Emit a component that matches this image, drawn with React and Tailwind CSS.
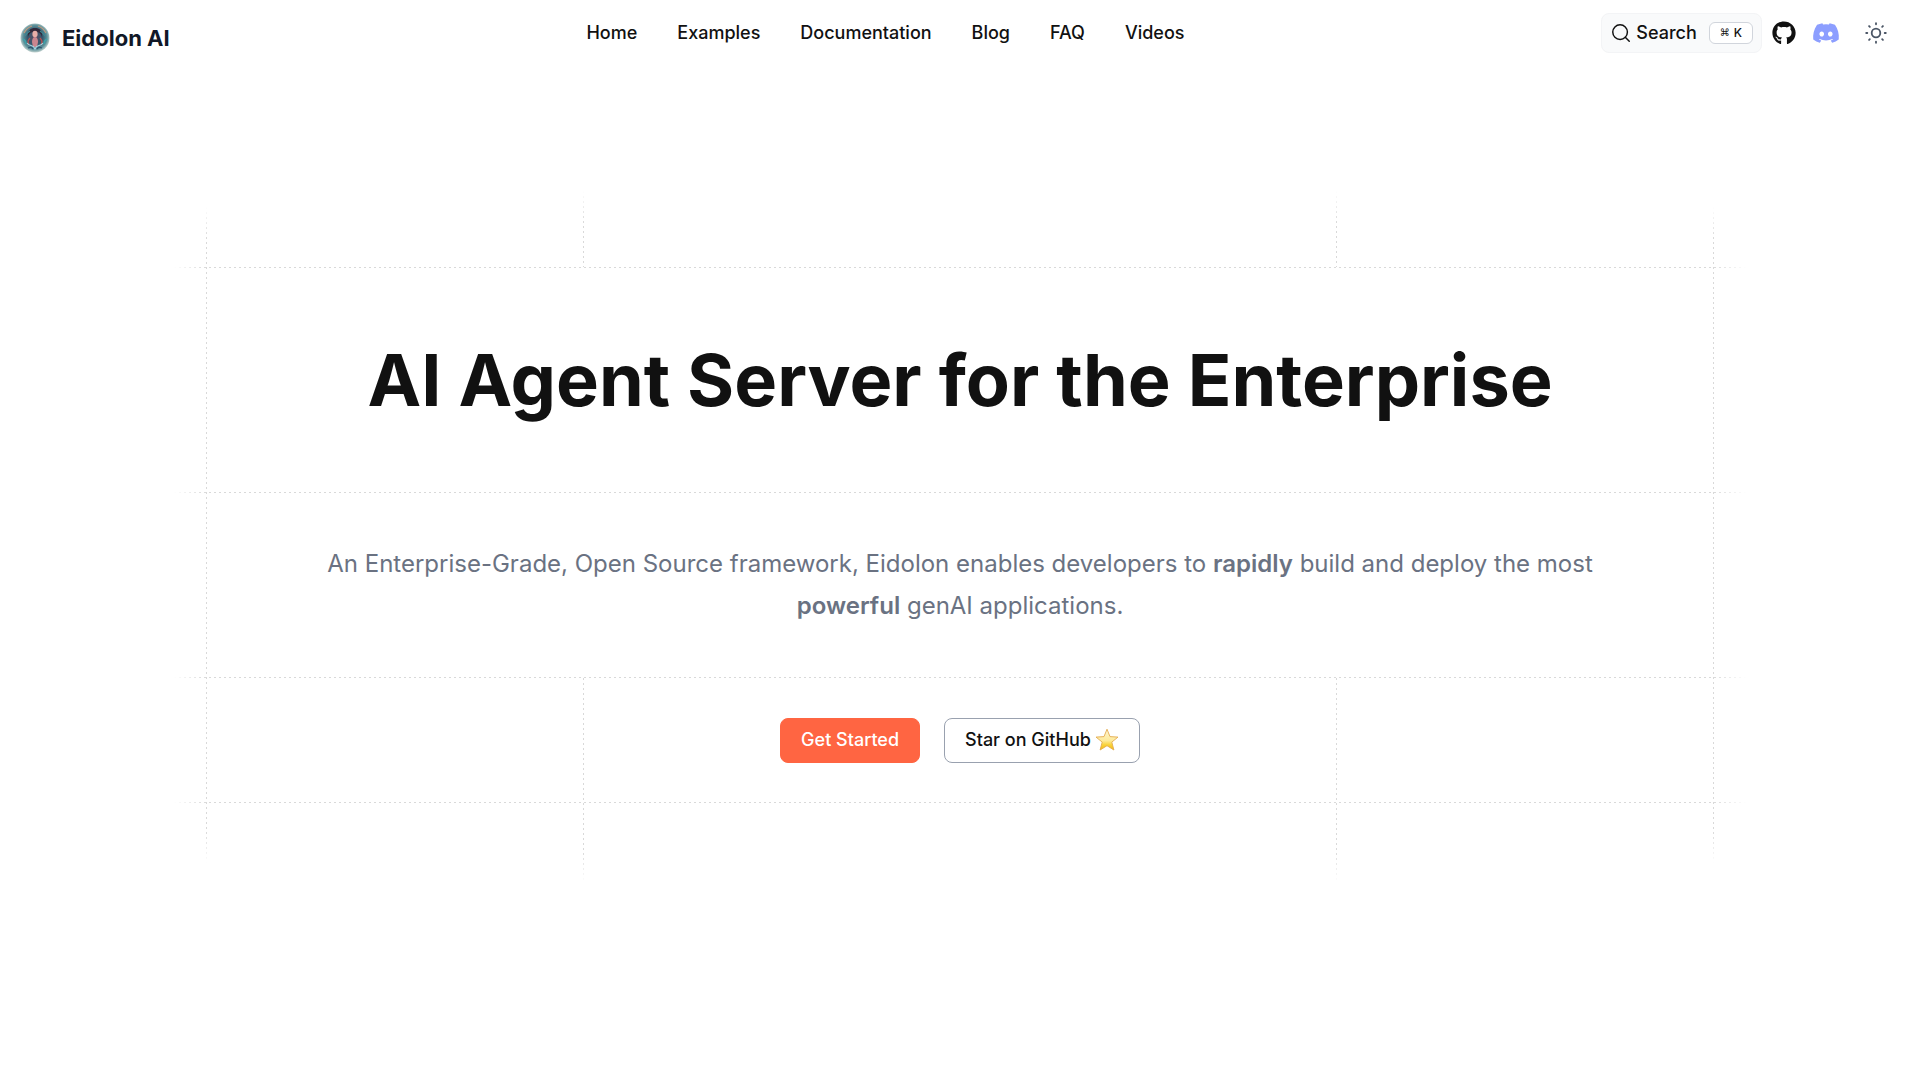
import { Search } from 'lucide-react';
import { FaDiscord, FaGithub } from 'react-icons/fa';

const NAV_LINKS = ['Home', 'Examples', 'Documentation', 'Blog', 'FAQ', 'Videos'];

const SUN_RAYS = [0, 45, 90, 135, 180, 225, 270, 315];

const Logo = () => (
  <svg viewBox="0 0 30 30" className="size-[30px]" aria-hidden="true">
    <defs>
      <radialGradient id="orb" cx="50%" cy="48%" r="52%">
        <stop offset="0" stopColor="#5b4a62" />
        <stop offset="0.5" stopColor="#34596f" />
        <stop offset="0.8" stopColor="#5d929b" />
        <stop offset="1" stopColor="#c3d2cf" />
      </radialGradient>
    </defs>
    <circle cx="15" cy="15" r="14.5" fill="url(#orb)" />
    <path d="M8 14c-1-7 3-9 7-9s8 2 7 9c-1-4-3-5-7-5s-6 1-7 5z" fill="#33293b" />
    <path d="M4 10c2-4 5-6 8-7M26 10c-2-4-5-6-8-7" fill="none" stroke="#c09a80" strokeWidth="1.3" />
    <path d="M5 13c2-3 3-4 5-5M25 13c-2-3-3-4-5-5" fill="none" stroke="#3c8a94" strokeWidth="1.2" />
    <ellipse cx="15" cy="11" rx="2.6" ry="3.2" fill="#e8aea8" />
    <path d="M12 19c0-3 1-5 3-5s3 2 3 5l-1 5h-4z" fill="#c9868f" />
    <path d="M10 15c-2 2-3 4-1 7M20 15c2 2 3 4 1 7" fill="none" stroke="#b8504f" strokeWidth="1.3" />
    <path d="M7 20c3 4 6 1 8 6 2-5 5-2 8-6" fill="none" stroke="#a5d7e2" strokeWidth="1.2" />
    <path d="M3 16c2 1 3 3 3 5M27 16c-2 1-3 3-3 5" fill="none" stroke="#3fa0a8" strokeWidth="1.4" />
    <path d="M8 25c2-1 4-1 5 1M22 25c-2-1-4-1-5 1" fill="none" stroke="#2e5571" strokeWidth="1.2" />
  </svg>
);

const SunIcon = () => (
  <svg viewBox="0 0 24 24" className="size-6" fill="none" stroke="currentColor" strokeWidth="1.8" strokeLinecap="round" aria-hidden="true">
    <circle cx="12" cy="12" r="4.3" />
    {SUN_RAYS.map((angle) => (
      <path key={angle} d="M12 2.2v1.1" transform={`rotate(${angle} 12 12)`} />
    ))}
  </svg>
);

const StarIcon = () => (
  <svg viewBox="0 0 24 24" className="size-6" aria-hidden="true">
    <defs>
      <linearGradient id="star" x1="0" y1="0" x2="0" y2="1">
        <stop offset="0" stopColor="#fff6d2" />
        <stop offset="0.55" stopColor="#fdea9a" />
        <stop offset="0.75" stopColor="#f9d33a" />
        <stop offset="1" stopColor="#f5b914" />
      </linearGradient>
    </defs>
    <path
      d="M12 1.2l3 7.4 8 .5-6.2 5 2.1 7.900L12 17.700 5.100 22l2.100-7.900L1 9.100l8-.5z"
      fill="url(#star)"
      stroke="#e3ac50"
      strokeWidth="0.9"
      strokeLinejoin="round"
    />
  </svg>
);

// Dotted guide lines, faded out at their free ends
const HorizontalLine = () => (
  <div className="-mx-8 h-px bg-[repeating-linear-gradient(to_right,#d9d9d9_0_2px,transparent_2px_5px)] [mask-image:linear-gradient(to_right,transparent,black_32px,black_calc(100%-32px),transparent)]" />
);

const DOTS = 'w-px bg-[repeating-linear-gradient(to_bottom,#d9d9d9_0_2px,transparent_2px_5px)]';
const FADE_BOTH = '[mask-image:linear-gradient(to_bottom,transparent,black_32px,black_calc(100%-32px),transparent)]';
const FADE_TOP = '[mask-image:linear-gradient(to_bottom,transparent,black_32px)]';
const FADE_BOTTOM = '[mask-image:linear-gradient(to_top,transparent,black_32px)]';

// Middle column of the hero grid, with a guide line on either side
const GuideRow = ({ height, fade, children }) => (
  <div className="grid grid-cols-4">
    <div className={`col-span-2 col-start-2 flex justify-between ${height}`}>
      <div className={`${DOTS} ${fade}`} />
      {children}
      <div className={`${DOTS} ${fade}`} />
    </div>
  </div>
);

const Header = () => (
  <header className="flex items-start justify-between px-5 pt-[13px]">
    <a href="#" className="flex items-center gap-3 pt-[9px] text-[22px] leading-8 font-bold text-[#111827]">
      <Logo />
      Eidolon AI
    </a>
    <nav className="flex h-10 items-center gap-10 text-lg font-medium">
      {NAV_LINKS.map((label) => (
        <a key={label} href="#">
          {label}
        </a>
      ))}
    </nav>
    <div className="flex items-center">
      <button type="button" className="flex h-10 items-center rounded-lg border border-gray-100 bg-gray-50 px-2 text-lg font-medium">
        <Search className="mr-1 size-[22px]" strokeWidth={1.6} />
        Search
        <kbd className="ml-3 flex h-[22px] items-center gap-1 rounded-md border border-gray-300 bg-white px-2.5 font-['Inter'] text-xs font-medium">
          <span className="font-['DejaVu_Sans'] text-[10px]">⌘</span>K
        </kbd>
      </button>
      <a href="#" aria-label="GitHub" className="ml-2.5">
        <FaGithub className="size-6" />
      </a>
      <a href="#" aria-label="Discord" className="ml-4 text-[#8c9eff]">
        <FaDiscord className="size-7" />
      </a>
      <button type="button" aria-label="Toggle theme" className="mr-3 ml-6 text-gray-600">
        <SunIcon />
      </button>
    </div>
  </header>
);

const Hero = () => (
  <main className="px-10 pt-[137px] pb-48">
    <section className="relative mx-auto w-full max-w-[1508px]">
      <div className={`absolute top-4 bottom-5 left-0 ${DOTS} ${FADE_BOTH}`} />
      <div className={`absolute top-4 right-0 bottom-5 ${DOTS} ${FADE_BOTH}`} />

      <GuideRow height="h-[76px]" fade={FADE_TOP} />

      <HorizontalLine />
      <h1 className="py-16 text-center text-7xl leading-24 font-bold text-[#111111]">
        AI Agent Server for the Enterprise
      </h1>
      <HorizontalLine />
      <p className="mx-auto max-w-[1320px] py-[50px] text-center text-2xl leading-[42px] text-gray-500">
        An Enterprise-Grade, Open Source framework, Eidolon enables developers to{' '}
        <strong className="font-semibold">rapidly</strong> build and deploy the most{' '}
        <strong className="font-semibold">powerful</strong> genAI applications.
      </p>
      <HorizontalLine />

      <GuideRow height="h-[124px]" fade="">
        <div className="flex items-center gap-6 text-lg font-medium">
          <a href="#" className="flex h-[45px] items-center rounded-lg border border-[#ff6542] bg-[#ff6542] px-5 text-white">
            Get Started
          </a>
          <a href="#" className="flex h-[45px] items-center gap-1 rounded-lg border border-gray-400 px-5 text-[#111111]">
            Star on GitHub
            <StarIcon />
          </a>
        </div>
      </GuideRow>

      <HorizontalLine />
      <GuideRow height="h-20" fade={FADE_BOTTOM} />
    </section>
  </main>
);

const App = () => (
  <div className="min-h-screen bg-white font-['Inter',sans-serif] text-[#111111]">
    <Header />
    <Hero />
  </div>
);

export default App;
